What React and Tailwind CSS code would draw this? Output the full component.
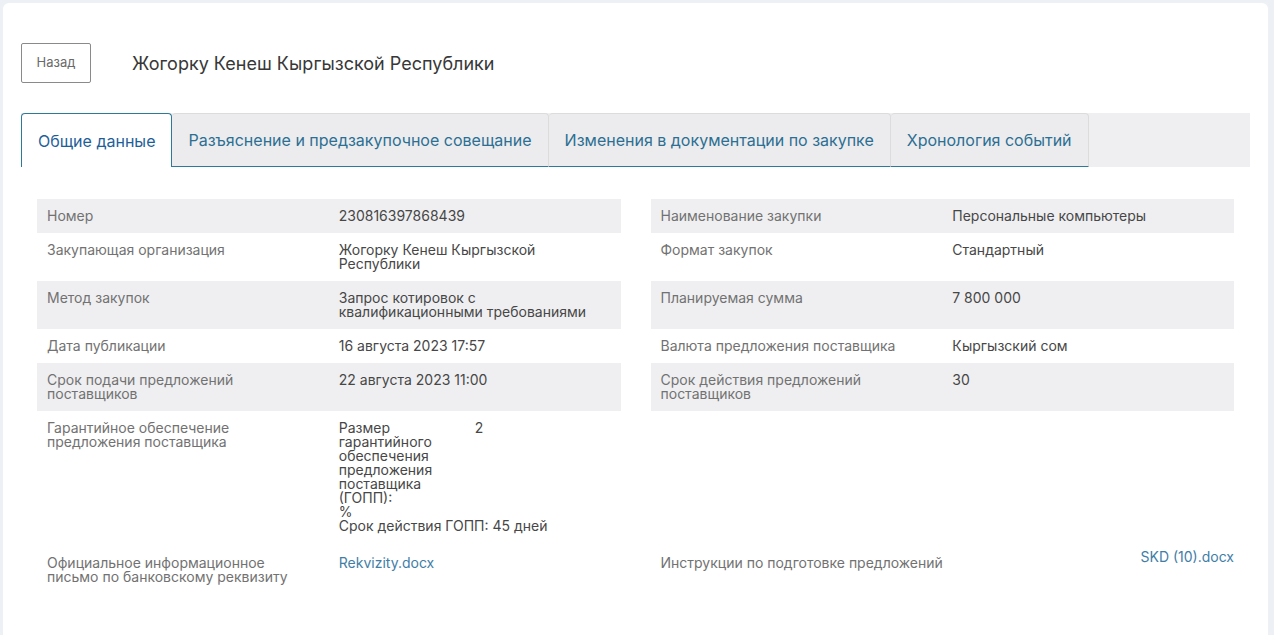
import React from "react";

const rows = [
  {
    bg: true,
    left: ["Номер", "230816397868439"],
    right: ["Наименование закупки", "Персональные компьютеры"],
  },
  {
    bg: false,
    left: ["Закупающая организация", "Жогорку Кенеш Кыргызской Республики"],
    right: ["Формат закупок", "Стандартный"],
  },
  {
    bg: true,
    left: ["Метод закупок", "Запрос котировок с квалификационными требованиями"],
    right: ["Планируемая сумма", "7 800 000"],
  },
  {
    bg: false,
    left: ["Дата публикации", "16 августа 2023 17:57"],
    right: ["Валюта предложения поставщика", "Кыргызский сом"],
  },
  {
    bg: true,
    left: ["Срок подачи предложений поставщиков", "22 августа 2023 11:00"],
    right: ["Срок действия предложений поставщиков", "30"],
  },
];

function Cell({ label, value, bg }) {
  return (
    <div className={`grid grid-cols-2 ${bg ? "bg-[#efeff1]" : "bg-white"}`}>
      <div className="px-[10px] py-[10px] text-[#727272]">{label}</div>
      <div className="px-[10px] py-[10px] text-[#474747]">{value}</div>
    </div>
  );
}

export default function App() {
  const tabs = [
    "Разъяснение и предзакупочное совещание",
    "Изменения в документации по закупке",
    "Хронология событий",
  ];
  return (
    <div
      className="min-h-[635px] bg-[#edf1f5] pt-[3px] pl-[3px] pr-[6px]"
      style={{ fontFamily: "Inter, 'Noto Sans', sans-serif" }}
    >
      <div className="bg-white rounded-[6px] min-h-[700px] pt-[40px] px-[18px]">
        <div className="flex items-center">
          <button className="w-[70px] h-[40px] border border-[#8a8a8a] rounded-[2px] text-[13px] text-[#6a6a6a]">
            Назад
          </button>
          <div className="ml-[41px] text-[18px] text-[#383838]">
            Жогорку Кенеш Кыргызской Республики
          </div>
        </div>

        <div className="mt-[30px] flex h-[54px] bg-[#efeff1] text-[16px]">
          <div className="h-full flex items-center px-4 bg-white border border-b-0 border-[#2b7a9c] rounded-t-[4px] text-[#1f5f99]">
            Общие данные
          </div>
          {tabs.map((t) => (
            <div
              key={t}
              className="h-full flex items-center px-4 bg-[#ececee] border-t border-r border-[#dcdcdc] border-b border-b-[#2b7a9c] rounded-t-[4px] text-[#2b6f93]"
            >
              {t}
            </div>
          ))}
        </div>

        <div className="mt-[32px] px-4 text-[14px] leading-[14px]">
          <div className="grid grid-cols-2 gap-x-[30px]">
            {rows.map((r, i) => (
              <React.Fragment key={i}>
                <Cell label={r.left[0]} value={r.left[1]} bg={r.bg} />
                <Cell label={r.right[0]} value={r.right[1]} bg={r.bg} />
              </React.Fragment>
            ))}

            <div className="grid grid-cols-2">
              <div className="px-[10px] py-[10px] text-[#727272]">
                Гарантийное обеспечение предложения поставщика
              </div>
              <div className="px-[10px] py-[10px] text-[#474747]">
                <div className="flex">
                  <div className="w-[136px]">
                    Размер гарантийного обеспечения предложения поставщика (ГОПП):
                  </div>
                  <div>2</div>
                </div>
                <div>%</div>
                <div>Срок действия ГОПП: 45 дней</div>
              </div>
            </div>
            <div />

            <div className="grid grid-cols-2 pt-[3px]">
              <div className="px-[10px] py-[10px] text-[#727272]">
                Официальное информационное письмо по банковскому реквизиту
              </div>
              <div className="px-[10px] py-[10px] text-[#3f7ea6]">
                Rekvizity.docx
              </div>
            </div>
            <div className="flex items-start justify-between pt-[3px]">
              <div className="px-[10px] py-[10px] text-[#727272]">
                Инструкции по подготовке предложений
              </div>
              <div className="py-[4px] text-[#3f7ea6]">SKD (10).docx</div>
            </div>
          </div>
        </div>
      </div>
    </div>
  );
}
